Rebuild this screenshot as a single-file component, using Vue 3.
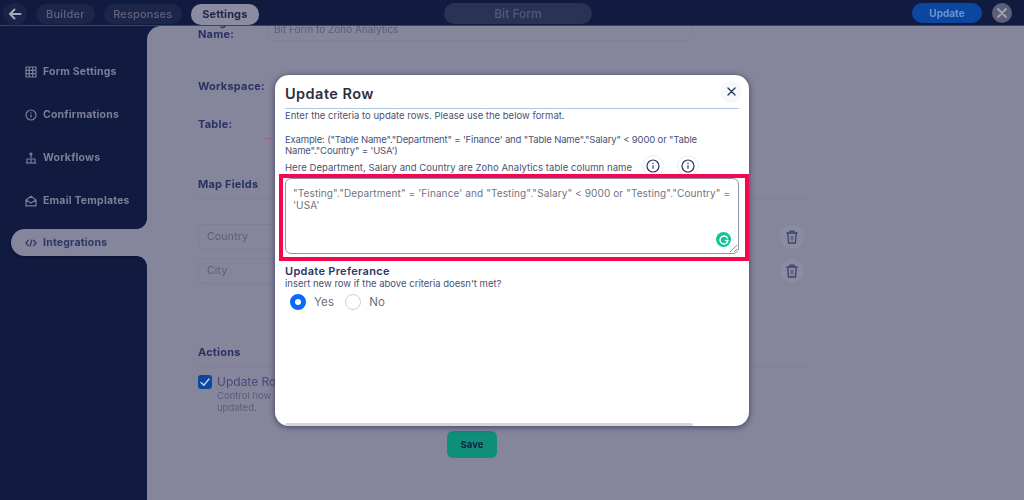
<script setup>
const navItems = [
  { label: 'Form Settings', icon: 'grid' },
  { label: 'Confirmations', icon: 'info' },
  { label: 'Workflows', icon: 'flow' },
  { label: 'Email Templates', icon: 'mail' },
  { label: 'Integrations', icon: 'code', active: true }
]
const mapRows = ['Country', 'City']
</script>

<template>
  <div class="page">
    <div class="backdrop">
      <header class="topbar">
        <div class="tabs">
          <button class="back">
            <svg width="14" height="14" viewBox="0 0 14 14" fill="none" stroke="currentColor" stroke-width="2" stroke-linecap="round" stroke-linejoin="round"><path d="M12.5 7H2M6.5 2.5 2 7l4.500 4.500" /></svg>
          </button>
          <span class="tab">Builder</span>
          <span class="tab responses">Responses</span>
          <span class="tab active">Settings</span>
        </div>
        <div class="title-pill">Bit Form</div>
        <div class="top-actions">
          <span class="update">Update</span>
          <span class="top-close">
            <svg width="10" height="10" viewBox="0 0 10 10" stroke="currentColor" stroke-width="1.800" stroke-linecap="round"><path d="M1 1l8 8M9 1l-8 8" /></svg>
          </span>
        </div>
      </header>

      <div class="body">
        <nav class="sidebar">
          <a v-for="item in navItems" :key="item.label" class="nav-item" :class="{ on: item.active }">
            <svg class="nav-icon" width="12" height="12" viewBox="0 0 12 12" fill="none" stroke="currentColor" stroke-width="1.200">
              <template v-if="item.icon === 'grid'">
                <path d="M1 1h10v10H1zM4.300 1v10M7.700 1v10M1 4.300h10M1 7.700h10" />
              </template>
              <template v-else-if="item.icon === 'info'">
                <circle cx="6" cy="6" r="5" />
                <path d="M6 5.500v3M6 3.200v1" />
              </template>
              <template v-else-if="item.icon === 'flow'">
                <path d="M6 1v5M2 11V7h8v4M6 7v4" />
                <circle cx="6" cy="2" r="1" />
                <path d="M.8 11h10.400" />
              </template>
              <template v-else-if="item.icon === 'mail'">
                <path d="M1 5 6 1.200 11 5v5.800H1zM1 5l5 3 5-3" />
              </template>
              <template v-else>
                <path d="M3.500 3 1 6l2.500 3M8.500 3 11 6 8.500 9M7 2.500 5 9.500" />
              </template>
            </svg>
            {{ item.label }}
          </a>
        </nav>

        <main class="content">
          <div class="name-row">
            <span class="label name-label"><span class="clipped">Integration</span>Name:</span>
            <span class="name-input">Bit Form to Zoho Analytics</span>
          </div>
          <div class="label workspace">Workspace:</div>
          <div class="label table-row">Table:<span class="red-dash"></span></div>
          <div class="section map-title">Map Fields</div>
          <div class="map-rows">
            <div v-for="row in mapRows" :key="row" class="map-row">
              <span class="map-input">{{ row }}</span>
              <span class="trash">
                <svg width="12" height="14" viewBox="0 0 12 14" fill="none" stroke="currentColor" stroke-width="1.300"><path d="M.5 3h11M4 3V1.200h4V3M1.800 3l.7 10h7l.7-10" /><path d="M4.500 6h3v4.500h-3z" fill="currentColor" stroke="none" opacity=".5" /></svg>
              </span>
            </div>
          </div>
          <div class="section actions-title">Actions</div>
          <div class="action">
            <span class="check">
              <svg width="12" height="12" viewBox="0 0 12 12" fill="none" stroke="#b9c8ea" stroke-width="1.600" stroke-linecap="round" stroke-linejoin="round"><path d="M2 6.500 4.800 9.200 10 3" /></svg>
            </span>
            <div>
              <div class="action-title">Update Row</div>
              <div class="action-note">Control how rows are<br>updated.</div>
            </div>
          </div>
          <span class="save">Save</span>
        </main>
      </div>
    </div>

    <section class="modal">
      <div class="modal-head">
        <h2>Update Row</h2>
        <span class="modal-close">
          <svg width="9" height="9" viewBox="0 0 9 9" stroke="#26305a" stroke-width="1.300" stroke-linecap="round"><path d="M1 1l7 7M8 1 1 8" /></svg>
        </span>
      </div>
      <p class="intro">Enter the criteria to update rows. Please use the below format.</p>
      <p class="example">Example: ("Table Name"."Department" = 'Finance' and "Table Name"."Salary" &lt; 9000 or "Table Name"."Country" = 'USA')</p>
      <div class="here">
        <span>Here Department, Salary and Country are Zoho Analytics table column name</span>
        <span class="info-btn first">
          <svg width="14" height="14" viewBox="0 0 14 14" fill="none" stroke="#2a3466" stroke-width="1.200"><circle cx="7" cy="7" r="6" /><path d="M7 6.300v3.500M7 3.800v1.200" /></svg>
        </span>
        <span class="info-btn">
          <svg width="14" height="14" viewBox="0 0 14 14" fill="none" stroke="#2a3466" stroke-width="1.200"><circle cx="7" cy="7" r="6" /><path d="M7 6.300v3.500M7 3.800v1.200" /></svg>
        </span>
      </div>
      <div class="highlight">
        <div class="criteria">
          "Testing"."Department" = 'Finance' and "Testing"."Salary" &lt; 9000 or "Testing"."Country" = 'USA'
          <span class="grammarly">
            <svg width="10" height="10" viewBox="0 0 10 10" fill="none" stroke="#fff" stroke-width="1.400" stroke-linecap="round"><path d="M8.500 3A4 4 0 1 0 9 5.500H6.500" /></svg>
          </span>
          <svg class="grip" width="8" height="8" viewBox="0 0 8 8" stroke="#8f8f9c" stroke-width="1"><path d="M1 8l7-7M5 8l3-3" /></svg>
        </div>
      </div>
      <h3>Update Preferance</h3>
      <p class="hint">insert new row if the above criteria doesn't met?</p>
      <div class="radios">
        <span class="radio checked"></span><span class="radio-text yes">Yes</span>
        <span class="radio"></span><span class="radio-text">No</span>
      </div>
      <div class="scrollbar"></div>
    </section>
  </div>
</template>

<style>
html, body { margin: 0; background: #85859c; }
</style>

<style scoped>
* { box-sizing: border-box; }
.page {
  position: relative;
  width: 1024px;
  height: 500px;
  overflow: hidden;
  font-family: Inter, "Liberation Sans", sans-serif;
  background: #85859c;
}
.backdrop {
  display: flex;
  flex-direction: column;
  height: 500px;
  filter: blur(0.7px);
}
.topbar {
  height: 26px;
  flex: none;
  background: #111b3f;
  display: flex;
  align-items: flex-start;
  justify-content: space-between;
  border-bottom: 1px solid #3a4163;
  position: relative;
}
.tabs { display: flex; align-items: center; gap: 9px; padding: 3px 0 0 3px; }
.back {
  width: 24px; height: 22px; border: 0; padding: 0; border-radius: 50%;
  background: #1a2448; color: #a7a9bb; display: flex; align-items: center; justify-content: center;
}
.tab {
  height: 20px; padding: 0 10px; border-radius: 10px; background: #1c2648;
  color: #5c6483; font-size: 11px; font-weight: 500; line-height: 20px; letter-spacing: .25px;
}
.tab.responses { color: #62607f; padding: 0 9.500px; letter-spacing: .15px; }
.tab.active {
  height: 21px; line-height: 21px; background: #8b8ba1; color: #1f2748; font-weight: 700; padding: 0 11.500px; letter-spacing: .1px;
}
.title-pill {
  position: absolute; left: 444px; top: 3px; width: 148px; height: 21px; border-radius: 11px;
  background: #2b3354; color: #525a7c; font-size: 12px; line-height: 21px; text-align: center; font-weight: 500;
}
.top-actions { display: flex; align-items: center; gap: 10px; padding: 3px 12px 0 0; }
.update {
  width: 70px; height: 20px; border-radius: 10px; background: #0b47a1; color: #6f93cf;
  font-size: 10px; font-weight: 700; line-height: 20px; text-align: center;
}
.top-close {
  width: 20px; height: 20px; border-radius: 50%; background: #5c5f78; color: #a2a4b4;
  display: flex; align-items: center; justify-content: center;
}
.body { flex: 1; display: flex; background: #111b3f; min-height: 0; }
.sidebar {
  width: 147px; flex: none; padding: 32px 0 0 11px; display: flex; flex-direction: column; gap: 16px;
}
.nav-item {
  position: relative; height: 27px; display: flex; align-items: center; gap: 6px; padding-left: 14px;
  border-radius: 14px 0 0 14px; color: #7b7f98; font-size: 10.500px; font-weight: 700; letter-spacing: .2px;
}
.nav-icon { flex: none; }
.nav-item.on { background: #85859c; color: #2e3763; margin-top: -1px; box-shadow: -1px 1px 2px #0b1230; }
.nav-item.on::before, .nav-item.on::after {
  content: ""; position: absolute; right: 0; width: 10px; height: 10px;
}
.nav-item.on::before { top: -10px; background: radial-gradient(circle at 0 0, #111b3f 9.500px, #85859c 10px); }
.nav-item.on::after { bottom: -10px; background: radial-gradient(circle at 0 100%, #111b3f 9.500px, #85859c 10px); }
.content {
  position: relative; flex: 1; background: #85859c; border-top-left-radius: 14px; padding-left: 51px; overflow: hidden; min-width: 0;
}
.label { color: #2a325f; font-size: 11px; font-weight: 700; letter-spacing: .2px; }
.name-row { display: flex; align-items: flex-start; height: 31px; margin-top: -10px; }
.name-label { display: block; width: 69px; line-height: 12px; }
.clipped { display: block; }
.name-input {
  width: 425px; height: 21px; border: 1px solid #80809a; border-radius: 6px; margin-top: 4px;
  padding: 0 6px; color: #5a5d7a; font-size: 10px; line-height: 17px;
}
.workspace { margin-top: 32px; line-height: 14px; }
.table-row { margin-top: 24px; line-height: 14px; position: relative; }
.red-dash { position: absolute; left: 68px; top: 21px; width: 6px; height: 1px; background: #a06078; }
.section { color: #2a325f; font-size: 11px; font-weight: 700; letter-spacing: .2px; border-bottom: 1px solid #7e7e96; width: 610px; padding-bottom: 7px; }
.map-title { margin-top: 46px; line-height: 14px; }
.map-rows { display: flex; flex-direction: column; gap: 8px; margin-top: 25px; }
.map-row { display: flex; align-items: center; justify-content: space-between; width: 610px; padding-right: 4px; }
.map-input {
  width: 200px; height: 26px; border: 1px solid #7f7f97; border-radius: 6px; padding-left: 8px;
  color: #5a5d7a; font-size: 10.500px; line-height: 24px; letter-spacing: .2px;
}
.trash {
  width: 24px; height: 24px; border-radius: 50%; background: #8b8ba1; color: #3c4468;
  display: flex; align-items: center; justify-content: center;
}
.actions-title { margin-top: 61px; line-height: 14px; }
.action { display: flex; gap: 5px; margin-top: 8px; }
.check {
  width: 14px; height: 14px; flex: none; border-radius: 3px; background: #0b47a1; display: flex; align-items: center; justify-content: center;
}
.action-title { color: #4a4a78; font-size: 12px; line-height: 14px; }
.action-note { color: #5a5d7a; font-size: 9.500px; line-height: 12px; margin-top: 1px; }
.save {
  position: absolute; left: 300px; top: 405px; width: 50px; height: 27px; border-radius: 6px; background: #0f8f79;
  color: #10204a; font-size: 9.500px; font-weight: 700; line-height: 27px; text-align: center;
}
.modal {
  position: absolute; left: 275px; top: 75px; width: 474px; height: 351px; background: #fff; border-radius: 14px;
  box-shadow: 0 1px 6px rgba(15, 20, 50, .6); padding: 0 10px; color: #4a5273; overflow: hidden;
}
.modal-head {
  height: 34px; border-bottom: 1px solid #a9c8ea; display: flex; align-items: center; justify-content: space-between;
}
.modal-head h2 { margin: 0; font-size: 14.500px; font-weight: 600; color: #2c2e3d; letter-spacing: .45px; padding-top: 4px; }
.modal-close {
  width: 22px; height: 22px; border-radius: 50%; background: #f7f8fa; display: flex; align-items: center; justify-content: center;
  margin: 0 -3px 0 0;
}
p { margin: 0; }
.intro { font-size: 9.500px; line-height: 12px; margin-top: 1px; }
.example { font-size: 9.500px; line-height: 11px; margin-top: 12px; letter-spacing: -.16px; }
.here { display: flex; align-items: center; height: 20px; font-size: 9.500px; margin-top: 1px; white-space: nowrap; position: relative; letter-spacing: .05px; }
.info-btn {
  position: absolute; top: -1px; width: 20px; height: 20px; border-radius: 50%; background: #fff; box-shadow: 0 0 2px rgba(60, 70, 110, .25);
  display: flex; align-items: center; justify-content: center;
}
.info-btn.first { left: 358px; }
.info-btn:not(.first) { left: 393px; }
.highlight {
  position: relative; z-index: 1;
  margin: -3px -10px 0 -6px; border: 4px solid #f5074f; height: 87px; padding: 0 6px 0 2px;
  background: #fff;
}
.criteria {
  position: relative; height: 76px; border: 1px solid #9090b0; border-radius: 6px; padding: 8px 7px 6px;
  font-size: 10px; line-height: 12px; color: #70737f; letter-spacing: .11px;
}
.grammarly {
  position: absolute; right: 7px; bottom: 6px; width: 15px; height: 15px; border-radius: 50%; background: #15c39a;
  display: flex; align-items: center; justify-content: center;
}
.grip { position: absolute; right: 1px; bottom: 1px; }
h3 { margin: 4px 0 0; font-size: 11px; line-height: 13px; font-weight: 600; color: #2c3566; letter-spacing: .3px; }
.hint { font-size: 9.500px; line-height: 11px; }
.radios { display: flex; align-items: center; margin: 4px 0 0 5px; height: 17px; }
.radio { width: 16px; height: 16px; border-radius: 50%; border: 1px solid #cfd0d6; flex: none; }
.radio.checked { border: 5px solid #0a6bfa; background: #fff; }
.radio-text { margin-left: 8px; font-size: 11.500px; color: #6c6f80; letter-spacing: .15px; }
.radio-text.yes { margin-right: 11px; }
.scrollbar { position: absolute; left: 10px; bottom: 0; width: 408px; height: 3px; background: #d6d6da; border-radius: 2px; }
</style>
